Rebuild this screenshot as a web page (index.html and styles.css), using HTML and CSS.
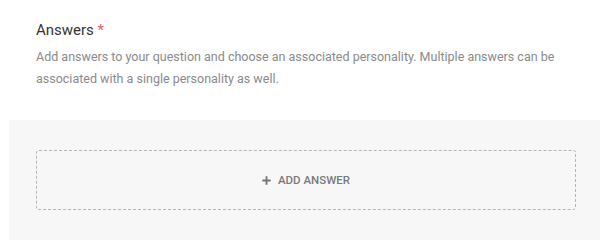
FILE: index.html
```html
<!DOCTYPE html>
<html>
<head>
<meta charset="utf-8">
<link rel="stylesheet" href="styles.css">
</head>
<body>
  <section class="field-head">
    <div class="field-title">Answers <span class="req">*</span></div>
    <p class="field-desc">Add answers to your question and choose an associated personality. Multiple answers can be associated with a single personality as well.</p>
  </section>
  <section class="answers-panel">
    <div class="add-answer">
      <svg class="plus" width="9" height="9" viewBox="0 0 9 9"><path d="M4.5 0.3v8.4M0.3 4.5h8.4" stroke="#777" stroke-width="1.9" fill="none"/></svg>
      <span>ADD ANSWER</span>
    </div>
  </section>
</body>
</html>
```

FILE: styles.css
```css
html, body {
  margin: 0;
  padding: 0;
  background: #fff;
  font-family: Roboto, "Liberation Sans", sans-serif;
}
.field-head {
  padding: 20px 30px 0 36px;
  height: 120px;
  box-sizing: border-box;
}
.field-title {
  font-size: 15px;
  line-height: 20px;
  color: #333;
}
.req {
  color: #f25c5c;
}
.field-desc {
  margin: 6px 0 0;
  font-size: 12.5px;
  line-height: 22px;
  color: #8a8a8a;
}
.answers-panel {
  margin-left: 9px;
  width: 591px;
  background: #f7f7f7;
  padding: 30px 24px 30px 27px;
  box-sizing: border-box;
  height: 120px;
}
.add-answer {
  height: 60px;
  box-sizing: border-box;
  border: 1px dashed #b5b5b5;
  border-radius: 3px;
  display: flex;
  align-items: center;
  justify-content: center;
  gap: 7px;
  color: #7a7a7a;
  font-size: 11.5px;
  font-weight: 500;
}
.plus {
  display: block;
}
```
